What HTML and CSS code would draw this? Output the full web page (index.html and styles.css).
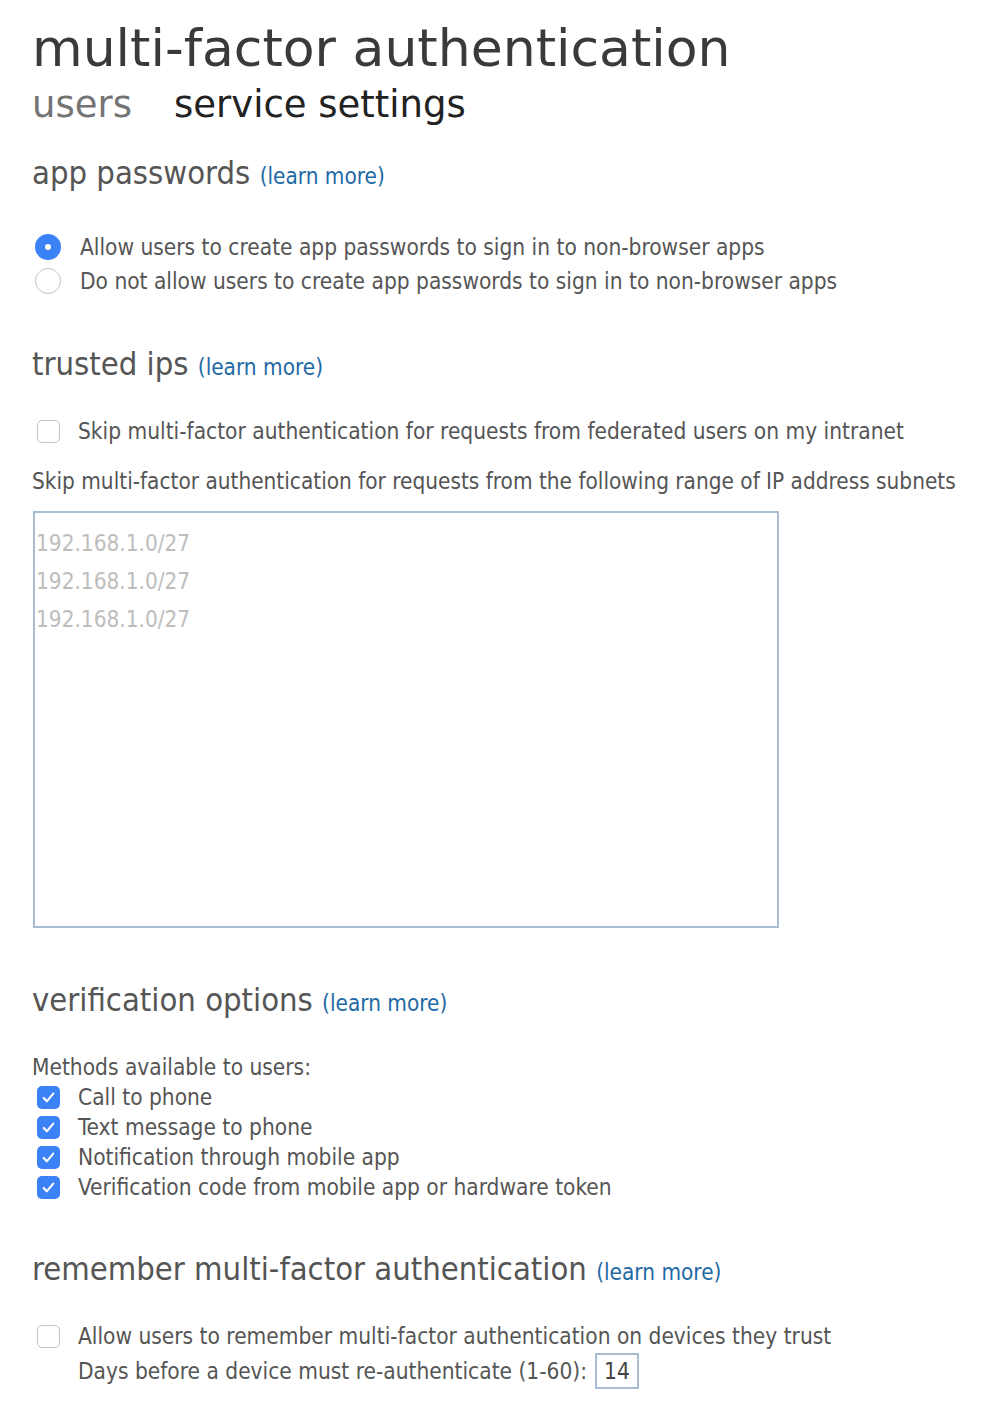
FILE: index.html
```
<!DOCTYPE html>
<html lang="en">
<head>
<meta charset="UTF-8">
<title>multi-factor authentication</title>
<link rel="stylesheet" href="styles.css">
</head>
<body>
<div class="page">
  <h1 class="title">multi-factor authentication</h1>
  <div class="tabs">
    <span class="tab">users</span>
    <span class="tab active">service settings</span>
  </div>

  <!-- app passwords -->
  <h2 class="section section-apps">app passwords <a class="learn" href="#">(learn more)</a></h2>
  <div class="options">
    <label class="row"><span class="radio on"></span>Allow users to create app passwords to sign in to non-browser apps</label>
    <label class="row"><span class="radio"></span>Do not allow users to create app passwords to sign in to non-browser apps</label>
  </div>

  <!-- trusted ips -->
  <h2 class="section">trusted ips <a class="learn" href="#">(learn more)</a></h2>
  <label class="row row-skip"><span class="box"></span>Skip multi-factor authentication for requests from federated users on my intranet</label>
  <p class="note">Skip multi-factor authentication for requests from the following range of IP address subnets</p>
  <textarea class="subnets" placeholder="192.168.1.0/27&#10;192.168.1.0/27&#10;192.168.1.0/27"></textarea>

  <!-- verification options -->
  <h2 class="section section-verify">verification options <a class="learn" href="#">(learn more)</a></h2>
  <p class="methods">Methods available to users:</p>
  <div class="checks">
    <label class="row row-tight"><span class="box on"><svg viewBox="0 0 24 24"><path d="M7 12.5l3.2 3.5L17 8" /></svg></span>Call to phone</label>
    <label class="row row-tight"><span class="box on"><svg viewBox="0 0 24 24"><path d="M7 12.5l3.2 3.5L17 8" /></svg></span>Text message to phone</label>
    <label class="row row-tight"><span class="box on"><svg viewBox="0 0 24 24"><path d="M7 12.5l3.2 3.5L17 8" /></svg></span>Notification through mobile app</label>
    <label class="row row-tight"><span class="box on"><svg viewBox="0 0 24 24"><path d="M7 12.5l3.2 3.5L17 8" /></svg></span>Verification code from mobile app or hardware token</label>
  </div>

  <!-- remember mfa -->
  <h2 class="section section-remember">remember multi-factor authentication <a class="learn" href="#">(learn more)</a></h2>
  <label class="row row-remember"><span class="box"></span>Allow users to remember multi-factor authentication on devices they trust</label>
  <div class="days">Days before a device must re-authenticate (1-60): <span class="days-input">14</span></div>
</div>
</body>
</html>
```

FILE: styles.css
```
body {
  margin: 0;
  background: #fff;
  font-family: "DejaVu Sans Condensed", "DejaVu Sans", sans-serif;
  color: #555;
}
.page {
  padding: 0 32px;
}

/* page title + tabs */
.title {
  margin: 0;
  padding-top: 20px;
  font-family: "DejaVu Sans", sans-serif;
  font-weight: normal;
  font-size: 52px;
  line-height: 56px;
  color: #3a3a3a;
}
.tabs {
  display: flex;
  gap: 42px;
  margin-top: 9px;
  font-family: "DejaVu Sans", sans-serif;
  font-size: 37px;
  line-height: 40px;
}
.tab { color: #747474; }
.tab.active { color: #222; }

/* section headings */
.section {
  margin: 46px 0 0;
  font-weight: normal;
  font-size: 32.5px;
  line-height: 40px;
  color: #555;
}
.section-apps { margin-top: 28px; }
.section-verify { margin-top: 52px; }
.section-remember { margin-top: 47px; }
.learn {
  font-size: 22.4px;
  color: #1f6aa5;
  text-decoration: none;
}

/* option rows */
.options {
  margin-top: 34px;
}
.row {
  display: flex;
  align-items: center;
  height: 34px;
  font-size: 22.5px;
  color: #555;
}
.row-tight { height: 30px; }
.row-skip { margin-top: 27px; }
.row-remember { margin-top: 27px; }

.radio {
  width: 26px;
  height: 26px;
  box-sizing: border-box;
  border: 1px solid #c4c4c4;
  border-radius: 50%;
  margin: 0 19px 0 3px;
  flex: none;
}
.radio.on {
  border: none;
  background: #3b82f6;
  position: relative;
}
.radio.on::after {
  content: "";
  position: absolute;
  left: 10px;
  top: 10px;
  width: 6px;
  height: 6px;
  border-radius: 50%;
  background: #fff;
}

.box {
  width: 23px;
  height: 23px;
  box-sizing: border-box;
  border: 1px solid #c4c4c4;
  border-radius: 5px;
  margin: 0 18px 0 5px;
  flex: none;
  display: flex;
}
.box.on {
  border: none;
  background: #3b82f6;
}
.box svg {
  width: 23px;
  height: 23px;
  fill: none;
  stroke: #fff;
  stroke-width: 2.2;
  stroke-linecap: round;
  stroke-linejoin: round;
}

/* ip subnets */
.note {
  margin: 16px 0 0;
  font-size: 22.4px;
  line-height: 34px;
}
.subnets {
  display: block;
  margin: 13px 0 0 1px;
  width: 746px;
  height: 417px;
  box-sizing: border-box;
  border: 2px solid #a9bdd2;
  padding: 11px 1px;
  resize: none;
  font-family: "DejaVu Sans Condensed", "DejaVu Sans", sans-serif;
  font-size: 22.4px;
  line-height: 38px;
}
.subnets::placeholder { color: #bdbdbd; }

.methods {
  margin: 29px 0 0;
  font-size: 22.5px;
  line-height: 30px;
}

.days {
  display: flex;
  align-items: center;
  height: 36px;
  padding-left: 46px;
  font-size: 22.5px;
  gap: 8px;
}
.days-input {
  display: inline-block;
  width: 44px;
  height: 36px;
  box-sizing: border-box;
  border: 2px solid #a9bdd2;
  padding-left: 7px;
  line-height: 32px;
  color: #444;
}
```
